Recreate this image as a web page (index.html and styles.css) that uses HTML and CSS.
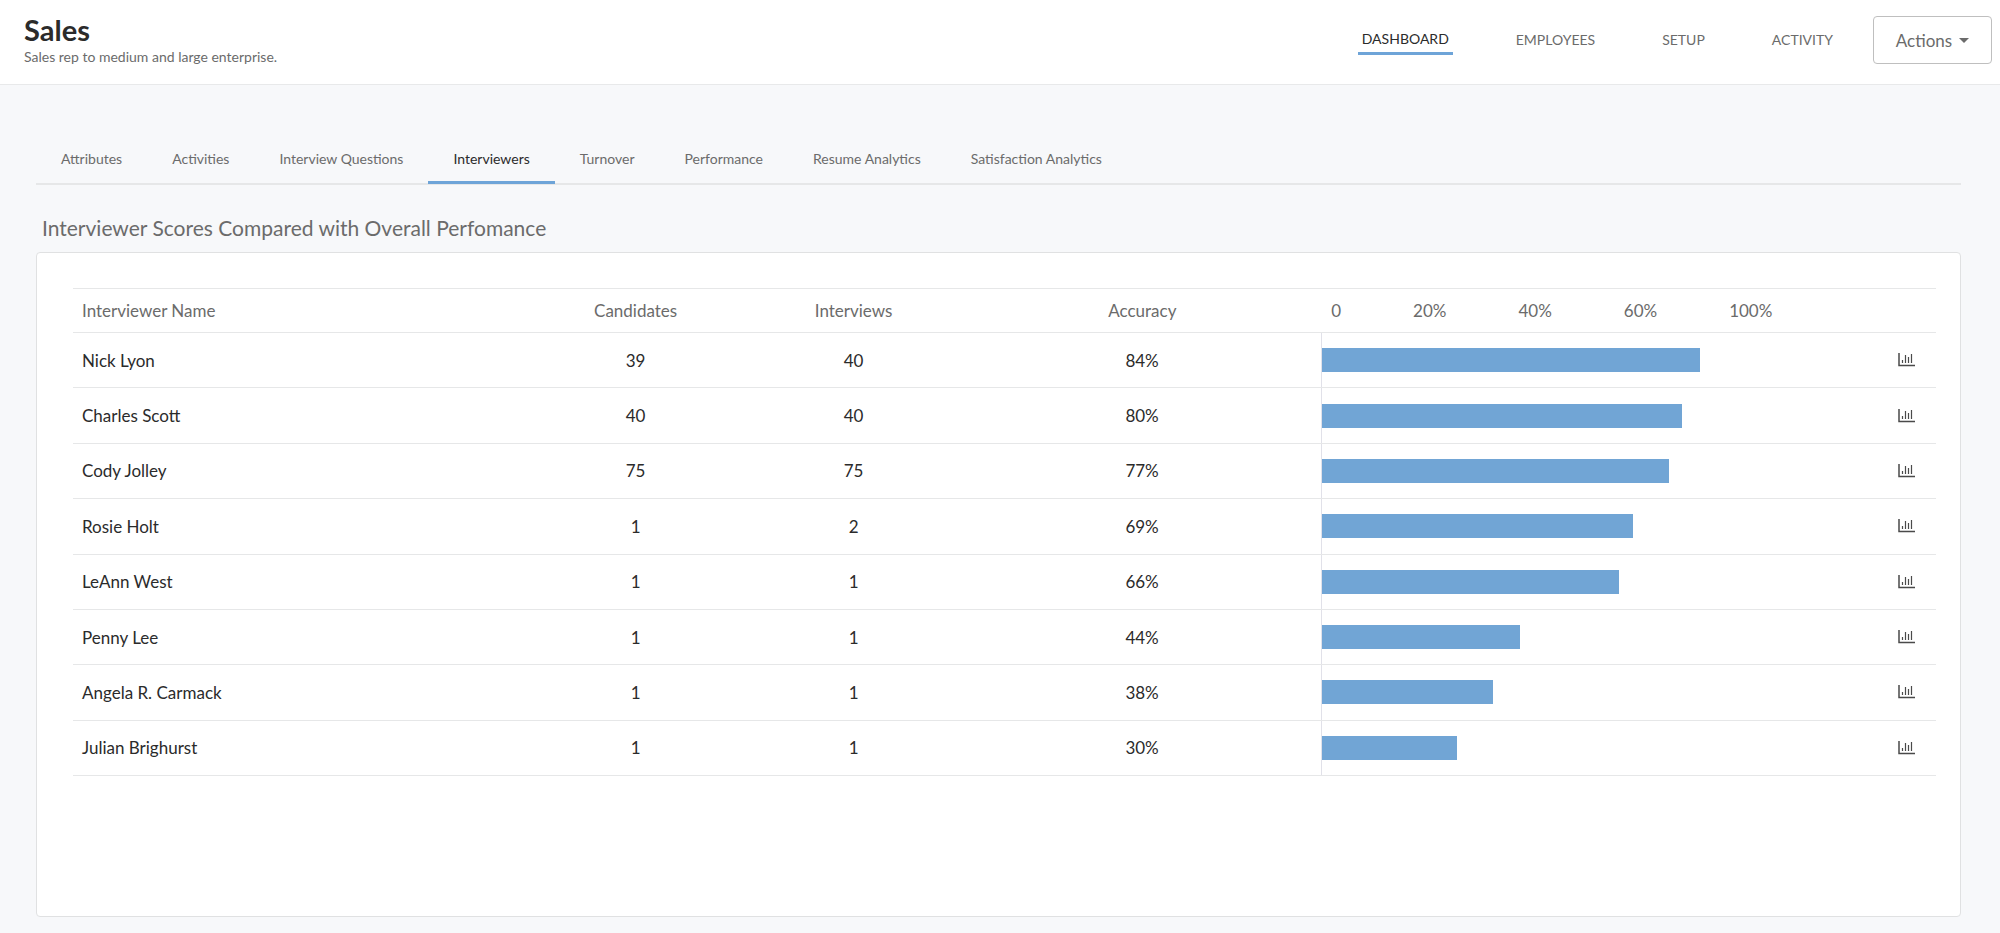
FILE: index.html
```html
<!DOCTYPE html>
<html lang="en">
<head>
  <meta charset="UTF-8" />
  <meta name="viewport" content="width=device-width, initial-scale=1.0"/>
  <title>Sales - Interviewers</title>
  <link rel="stylesheet" href="styles.css">
</head>
<body>
  <svg class="sprite" aria-hidden="true">
    <symbol id="chart-icon" viewBox="0 0 18 14">
      <path d="M1 0v12.5h16" stroke-width="1.5"/>
      <path d="M4.5 7v3M7.5 2v8M10.5 4v6M13.5 1v9" stroke-width="1.2"/>
    </symbol>
  </svg>

  <header class="page-header">
    <div class="page-title">
      <h1>Sales</h1>
      <p>Sales rep to medium and large enterprise.</p>
    </div>
    <nav class="main-nav">
      <a href="#" class="active">DASHBOARD</a>
      <a href="#">EMPLOYEES</a>
      <a href="#">SETUP</a>
      <a href="#">ACTIVITY</a>
    </nav>
    <button class="actions" type="button">Actions <span class="caret"></span></button>
  </header>

  <main>
    <nav class="tabs">
      <a href="#">Attributes</a>
      <a href="#">Activities</a>
      <a href="#">Interview Questions</a>
      <a href="#" class="active">Interviewers</a>
      <a href="#">Turnover</a>
      <a href="#">Performance</a>
      <a href="#">Resume Analytics</a>
      <a href="#">Satisfaction Analytics</a>
    </nav>

    <h2>Interviewer Scores Compared with Overall Perfomance</h2>
    <section class="card">
      <table>
        <colgroup>
          <col class="col-name">
          <col class="col-candidates">
          <col class="col-interviews">
          <col class="col-accuracy">
          <col class="col-chart">
          <col class="col-icon">
        </colgroup>
        <thead>
          <tr>
            <th class="name">Interviewer Name</th>
            <th>Candidates</th>
            <th>Interviews</th>
            <th>Accuracy</th>
            <th>
              <div class="scale"><span>0</span><span>20%</span><span>40%</span><span>60%</span><span>100%</span></div>
            </th>
            <th></th>
          </tr>
        </thead>
        <tbody>
          <tr>
            <td class="name">Nick Lyon</td><td>39</td><td>40</td><td>84%</td>
            <td class="chart"><div class="track"><div class="bar" style="width: 84%"></div></div></td>
            <td><a href="#" aria-label="Nick Lyon chart"><svg class="icon"><use href="#chart-icon"/></svg></a></td>
          </tr>
          <tr>
            <td class="name">Charles Scott</td><td>40</td><td>40</td><td>80%</td>
            <td class="chart"><div class="track"><div class="bar" style="width: 80%"></div></div></td>
            <td><a href="#" aria-label="Charles Scott chart"><svg class="icon"><use href="#chart-icon"/></svg></a></td>
          </tr>
          <tr>
            <td class="name">Cody Jolley</td><td>75</td><td>75</td><td>77%</td>
            <td class="chart"><div class="track"><div class="bar" style="width: 77%"></div></div></td>
            <td><a href="#" aria-label="Cody Jolley chart"><svg class="icon"><use href="#chart-icon"/></svg></a></td>
          </tr>
          <tr>
            <td class="name">Rosie Holt</td><td>1</td><td>2</td><td>69%</td>
            <td class="chart"><div class="track"><div class="bar" style="width: 69%"></div></div></td>
            <td><a href="#" aria-label="Rosie Holt chart"><svg class="icon"><use href="#chart-icon"/></svg></a></td>
          </tr>
          <tr>
            <td class="name">LeAnn West</td><td>1</td><td>1</td><td>66%</td>
            <td class="chart"><div class="track"><div class="bar" style="width: 66%"></div></div></td>
            <td><a href="#" aria-label="LeAnn West chart"><svg class="icon"><use href="#chart-icon"/></svg></a></td>
          </tr>
          <tr>
            <td class="name">Penny Lee</td><td>1</td><td>1</td><td>44%</td>
            <td class="chart"><div class="track"><div class="bar" style="width: 44%"></div></div></td>
            <td><a href="#" aria-label="Penny Lee chart"><svg class="icon"><use href="#chart-icon"/></svg></a></td>
          </tr>
          <tr>
            <td class="name">Angela R. Carmack</td><td>1</td><td>1</td><td>38%</td>
            <td class="chart"><div class="track"><div class="bar" style="width: 38%"></div></div></td>
            <td><a href="#" aria-label="Angela R. Carmack chart"><svg class="icon"><use href="#chart-icon"/></svg></a></td>
          </tr>
          <tr>
            <td class="name">Julian Brighurst</td><td>1</td><td>1</td><td>30%</td>
            <td class="chart"><div class="track"><div class="bar" style="width: 30%"></div></div></td>
            <td><a href="#" aria-label="Julian Brighurst chart"><svg class="icon"><use href="#chart-icon"/></svg></a></td>
          </tr>
        </tbody>
      </table>
    </section>
  </main>
</body>
</html>
```
FILE: styles.css
```css
* {
  box-sizing: border-box;
}
body {
  margin: 0;
  min-height: 100vh;
  display: flex;
  flex-direction: column;
  font-family: Lato, sans-serif;
  font-size: 17px;
  color: #2b2b2b;
  background-color: #f7f8fa;
}
a {
  color: inherit;
  text-decoration: none;
}
.sprite {
  display: none;
}

/* header */
.page-header {
  display: flex;
  align-items: center;
  height: 85px;
  padding: 0 8px 4px 24px;
  background-color: #fff;
  border-bottom: 1px solid #e8e9ea;
}
.page-title {
  margin-right: auto;
}
h1 {
  margin: 0;
  font-size: 29px;
  line-height: 34px;
}
.page-title p {
  margin: 0;
  font-size: 14px;
  line-height: 20px;
  color: #6b6b6b;
}
.main-nav {
  display: flex;
  align-items: center;
  gap: 59px;
  margin-right: 36px;
  font-size: 14px;
  line-height: 20px;
  color: #6b6b6b;
}
.main-nav a {
  padding: 0 4px;
}
.main-nav .active {
  padding-top: 3px;
  padding-bottom: 3px;
  color: #2b2b2b;
  border-bottom: 3px solid #6ea4d8;
}
.actions {
  display: flex;
  align-items: center;
  justify-content: center;
  gap: 7px;
  width: 119px;
  height: 48px;
  font-family: inherit;
  font-size: 17px;
  color: #6b6b6b;
  background-color: #fff;
  border: 1px solid #bfbfbf;
  border-radius: 4px;
}
.caret {
  border: 5px solid transparent;
  border-top-color: #6b6b6b;
  border-bottom: 0;
}

/* tabs */
main {
  flex: 1;
  display: flex;
  flex-direction: column;
  padding: 51px 39px 16px 36px;
}
.tabs {
  display: flex;
  font-size: 14px;
  line-height: 45px;
  color: #6b6b6b;
  border-bottom: 2px solid #e6e7e8;
}
.tabs a {
  padding: 0 25px;
  border-bottom: 3px solid transparent;
  margin-bottom: -1px;
}
.tabs .active {
  color: #2b2b2b;
  border-bottom-color: #6ea4d8;
}

h2 {
  margin: 27px 0 8px 6px;
  font-size: 21px;
  line-height: 32px;
  font-weight: normal;
  color: #6b6b6b;
}
.card {
  flex: 1;
  padding: 35px 24px 35px 36px;
  background-color: #fff;
  border: 1px solid #e0e1e2;
  border-radius: 4px;
}

/* interviewers table */
table {
  width: 100%;
  height: 488px;
  table-layout: fixed;
  border-collapse: collapse;
}
.col-name { width: 24.4%; }
.col-candidates { width: 11.6%; }
.col-interviews { width: 11.8%; }
.col-accuracy { width: 19.2%; }
.col-chart { width: 29.9%; }
.col-icon { width: 3.1%; }
th, td {
  padding: 0;
  text-align: center;
  border-bottom: 1px solid #e6e7e8;
}
th {
  height: 44px;
  font-weight: normal;
  color: #6b6b6b;
  border-top: 1px solid #e6e7e8;
}
.name {
  padding-left: 9px;
  text-align: left;
}
.scale {
  display: flex;
  gap: 72px;
  padding-left: 10px;
}
td.chart {
  border-left: 1px solid #e1e1e9;
}
.track {
  width: 81%;
}
.bar {
  height: 24px;
  background-color: #71a5d5;
}
.icon {
  display: block;
  width: 18px;
  height: 14px;
  margin: 0 auto;
  fill: none;
  stroke: #4a4a4a;
}
```
